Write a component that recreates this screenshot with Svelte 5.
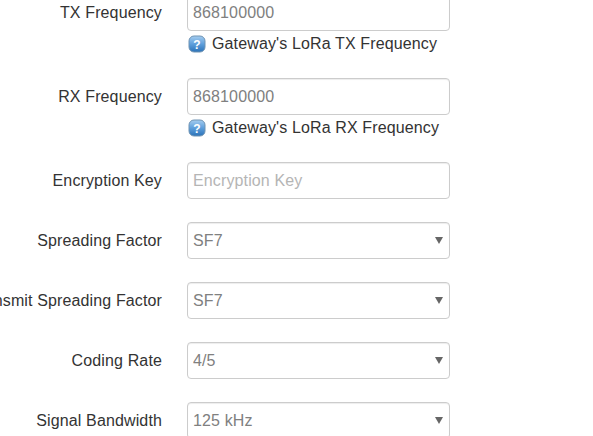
<script>
  const fields = [
    { label: 'TX Frequency', type: 'text', value: '868100000', help: "Gateway's LoRa TX Frequency" },
    { label: 'RX Frequency', type: 'text', value: '868100000', help: "Gateway's LoRa RX Frequency" },
    { label: 'Encryption Key', type: 'text', value: '', placeholder: 'Encryption Key' },
    { label: 'Spreading Factor', type: 'select', value: 'SF7' },
    { label: 'Transmit Spreading Factor', type: 'select', value: 'SF7' },
    { label: 'Coding Rate', type: 'select', value: '4/5' },
    { label: 'Signal Bandwidth', type: 'select', value: '125 kHz' }
  ];
</script>

<div class="page">
  <form class="form">
    {#each fields as field}
      <div class="row">
        <label class="label">{field.label}</label>
        <div class="control">
          {#if field.type === 'select'}
            <div class="select-wrap">
              <select class="input">
                <option>{field.value}</option>
              </select>
            </div>
          {:else}
            <input class="input" type="text" value={field.value} placeholder={field.placeholder} />
          {/if}
          {#if field.help}
            <div class="help">
              <svg class="icon" width="18" height="18" viewBox="0 0 18 18">
                <defs>
                  <linearGradient id="blue-{field.label.slice(0, 2)}" x1="0" y1="0" x2="0" y2="1">
                    <stop offset="0" stop-color="#a5cdf0" />
                    <stop offset="0.5" stop-color="#5f9fdc" />
                    <stop offset="1" stop-color="#2a72b8" />
                  </linearGradient>
                </defs>
                <rect x="1" y="1" width="16" height="16" rx="5" fill="url(#blue-{field.label.slice(0, 2)})" stroke="#6f93b3" />
                <text x="9" y="13.5" text-anchor="middle" class="mark">?</text>
              </svg>
              <span class="help-text">{field.help}</span>
            </div>
          {/if}
        </div>
      </div>
    {/each}
  </form>
</div>

<style>
  :global(body) {
    margin: 0;
    overflow: hidden;
    background: #fff;
  }

  .page {
    height: 436px;
    overflow: hidden;
    font-family: "Liberation Sans", Arial, sans-serif;
    font-size: 16px;
    letter-spacing: 0.13px;
    color: #333;
  }

  .form {
    margin-top: -6px;
  }

  .row {
    display: flex;
    margin-bottom: 23px;
  }

  .label {
    flex: 0 0 162px;
    min-width: 0;
    display: flex;
    justify-content: flex-end;
    white-space: nowrap;
    padding-top: 10px;
    line-height: 18px;
    margin-right: 25px;
  }

  .control {
    width: 263px;
  }

  .input {
    display: block;
    box-sizing: border-box;
    width: 100%;
    height: 37px;
    margin: 0;
    padding: 6px 5px;
    border: 1px solid #ccc;
    border-radius: 4px;
    background: #fff;
    box-shadow: inset 0 1px 1px rgba(0, 0, 0, 0.075);
    font-family: inherit;
    font-size: 16px;
    letter-spacing: inherit;
    color: #808080;
    outline: none;
  }

  .input::placeholder {
    color: #b5b5b5;
    opacity: 1;
  }

  select.input {
    appearance: none;
    -webkit-appearance: none;
  }

  .select-wrap {
    position: relative;
  }

  .select-wrap::after {
    content: "";
    position: absolute;
    right: 7.5px;
    top: 15px;
    border-left: 4px solid transparent;
    border-right: 4px solid transparent;
    border-top: 7px solid #666;
  }

  .help {
    display: flex;
    align-items: center;
    height: 24px;
    line-height: 24px;
  }

  .help-text {
    margin-top: 1px;
  }

  .icon {
    flex: none;
    margin: 2px 6px 0 1px;
  }

  .mark {
    font-family: "Liberation Sans", Arial, sans-serif;
    font-size: 12px;
    font-weight: bold;
    fill: #fff;
  }
</style>
